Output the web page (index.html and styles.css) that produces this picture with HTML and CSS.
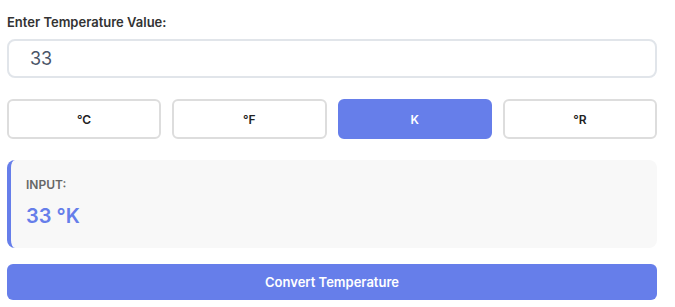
FILE: index.html
```html
<!DOCTYPE html>
<html>
<head>
<meta charset="utf-8">
<link rel="stylesheet" href="styles.css">
</head>
<body>
<div class="app">
  <label class="field-label" for="temp">Enter Temperature Value:</label>
  <input id="temp" class="temp-input" type="text" value="33">
  <div class="units">
    <button class="unit">°C</button>
    <button class="unit">°F</button>
    <button class="unit active">K</button>
    <button class="unit">°R</button>
  </div>
  <div class="result">
    <div class="result-label">INPUT:</div>
    <div class="result-value">33 °K</div>
  </div>
  <button class="convert">Convert Temperature</button>
</div>
</body>
</html>
```
FILE: styles.css
```css
* { box-sizing: border-box; }
body {
  margin: 0;
  background: #fff;
  font-family: Inter, "Noto Sans", sans-serif;
}
.app {
  width: 650px;
  margin-left: 7px;
  padding-top: 14px;
  display: flex;
  flex-direction: column;
}
.field-label {
  font-size: 13px;
  font-weight: 600;
  color: #333;
  line-height: 16px;
  margin-bottom: 9px;
}
.temp-input {
  height: 39px;
  border: 2px solid #e1e5ea;
  border-radius: 8px;
  padding: 0 21px;
  font-family: inherit;
  font-size: 18px;
  color: #4a5568;
  outline: none;
}
.units {
  margin-top: 21px;
  display: grid;
  grid-template-columns: repeat(4, 1fr);
  gap: 11px;
}
.unit {
  height: 40px;
  border: 2px solid #ddd;
  border-radius: 6px;
  background: #fff;
  font-family: inherit;
  font-size: 12px;
  font-weight: 600;
  color: #222;
}
.unit.active {
  background: #667eea;
  border-color: #667eea;
  color: #fff;
}
.result {
  margin-top: 21px;
  height: 88px;
  background: #f8f8f8;
  border-left: 4px solid #667eea;
  border-radius: 8px;
  padding: 18px 15px;
}
.result-label {
  font-size: 12px;
  font-weight: 600;
  color: #666;
  line-height: 14px;
}
.result-value {
  margin-top: 12px;
  font-size: 20px;
  font-weight: 600;
  color: #667eea;
  line-height: 24px;
}
.convert {
  margin-top: 16px;
  height: 36px;
  border: none;
  border-radius: 6px;
  background: #667eea;
  color: #fff;
  font-family: inherit;
  font-size: 13px;
  font-weight: 600;
}
```
